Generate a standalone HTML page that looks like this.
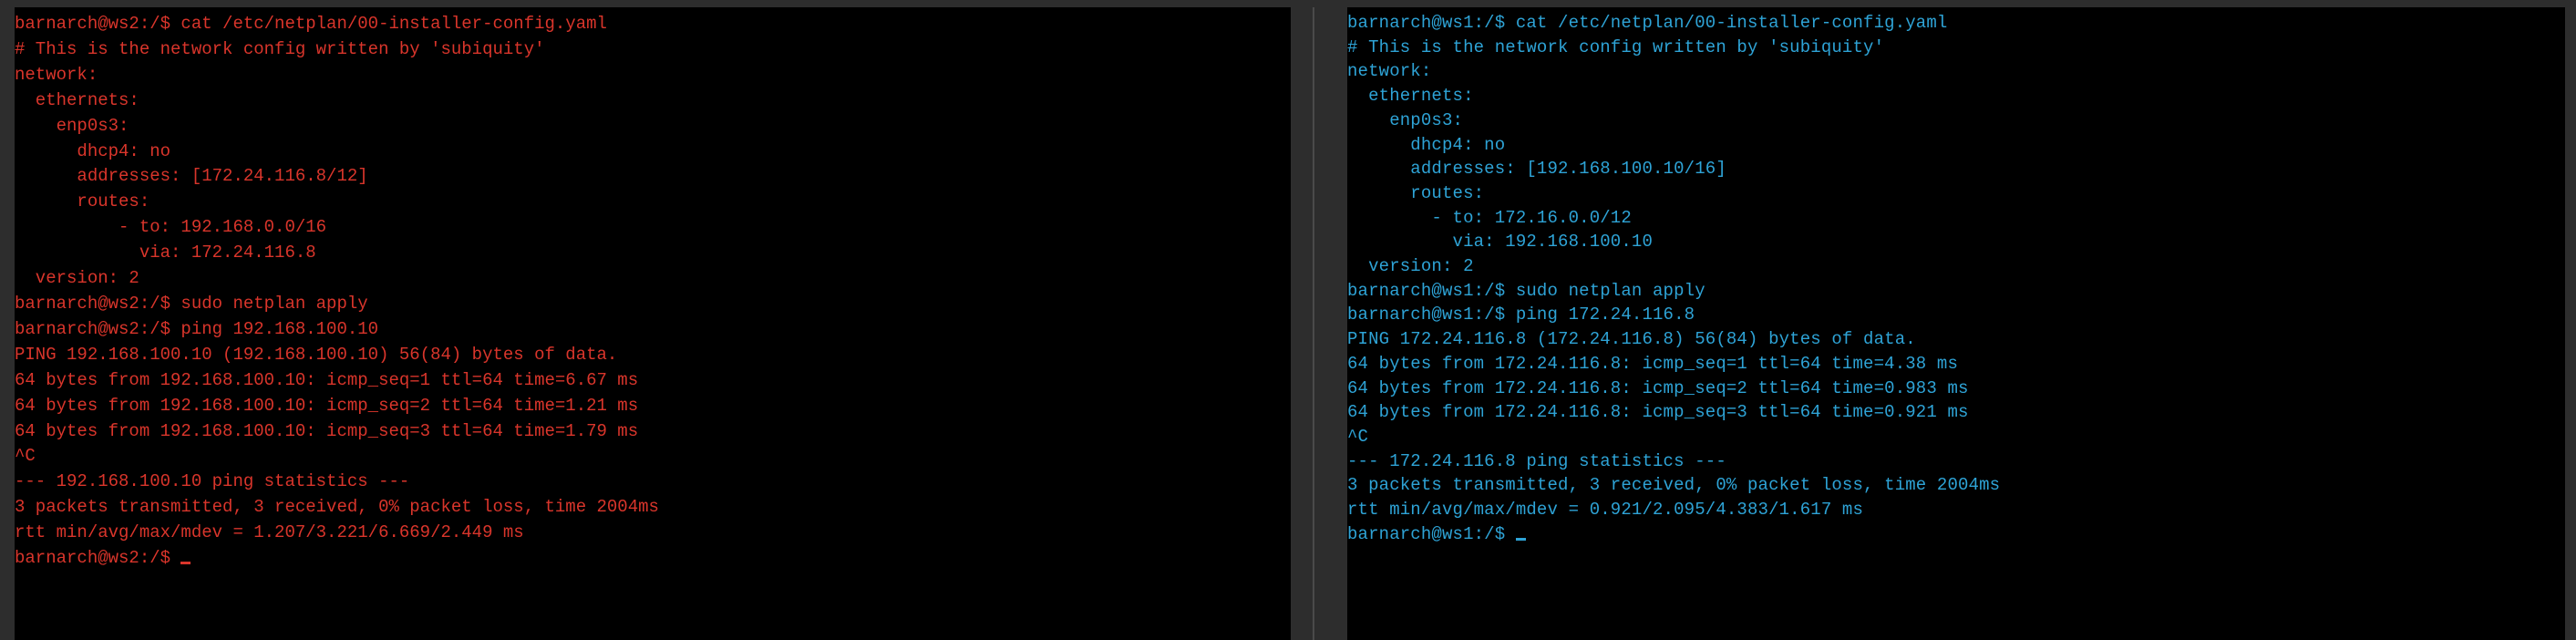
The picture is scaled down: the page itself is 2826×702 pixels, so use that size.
<!DOCTYPE html>
<html><head><meta charset="utf-8"><style>
html,body{margin:0;padding:0;width:2826px;height:702px;overflow:hidden;background:#2d2d2d;}
.p{position:absolute;top:8px;bottom:0;background:#000;}
pre{margin:0;position:absolute;top:13px;font-family:"Liberation Mono",monospace;font-size:19px;line-height:27.9px;white-space:pre;}
.r{color:#d9352b;}
.c{color:#2ea3d6;line-height:26.7px;top:12px;letter-spacing:0.15px;}
.cur{display:inline-block;width:11px;height:3px;background:currentColor;vertical-align:-2px;}
</style></head><body>
<div class="p" style="left:16px;width:1400px;"></div>
<div style="position:absolute;left:1440px;top:8px;bottom:0;width:2px;background:#4a4a4a;"></div>
<div class="p" style="left:1478px;width:1336px;"></div>
<pre class="r" style="left:16px;">barnarch@ws2:/$ cat /etc/netplan/00-installer-config.yaml
# This is the network config written by 'subiquity'
network:
  ethernets:
    enp0s3:
      dhcp4: no
      addresses: [172.24.116.8/12]
      routes:
          - to: 192.168.0.0/16
            via: 172.24.116.8
  version: 2
barnarch@ws2:/$ sudo netplan apply
barnarch@ws2:/$ ping 192.168.100.10
PING 192.168.100.10 (192.168.100.10) 56(84) bytes of data.
64 bytes from 192.168.100.10: icmp_seq=1 ttl=64 time=6.67 ms
64 bytes from 192.168.100.10: icmp_seq=2 ttl=64 time=1.21 ms
64 bytes from 192.168.100.10: icmp_seq=3 ttl=64 time=1.79 ms
^C
--- 192.168.100.10 ping statistics ---
3 packets transmitted, 3 received, 0% packet loss, time 2004ms
rtt min/avg/max/mdev = 1.207/3.221/6.669/2.449 ms
barnarch@ws2:/$ <span class="cur"></span></pre>
<pre class="c" style="left:1478px;">barnarch@ws1:/$ cat /etc/netplan/00-installer-config.yaml
# This is the network config written by 'subiquity'
network:
  ethernets:
    enp0s3:
      dhcp4: no
      addresses: [192.168.100.10/16]
      routes:
        - to: 172.16.0.0/12
          via: 192.168.100.10
  version: 2
barnarch@ws1:/$ sudo netplan apply
barnarch@ws1:/$ ping 172.24.116.8
PING 172.24.116.8 (172.24.116.8) 56(84) bytes of data.
64 bytes from 172.24.116.8: icmp_seq=1 ttl=64 time=4.38 ms
64 bytes from 172.24.116.8: icmp_seq=2 ttl=64 time=0.983 ms
64 bytes from 172.24.116.8: icmp_seq=3 ttl=64 time=0.921 ms
^C
--- 172.24.116.8 ping statistics ---
3 packets transmitted, 3 received, 0% packet loss, time 2004ms
rtt min/avg/max/mdev = 0.921/2.095/4.383/1.617 ms
barnarch@ws1:/$ <span class="cur"></span></pre>
</body></html>
